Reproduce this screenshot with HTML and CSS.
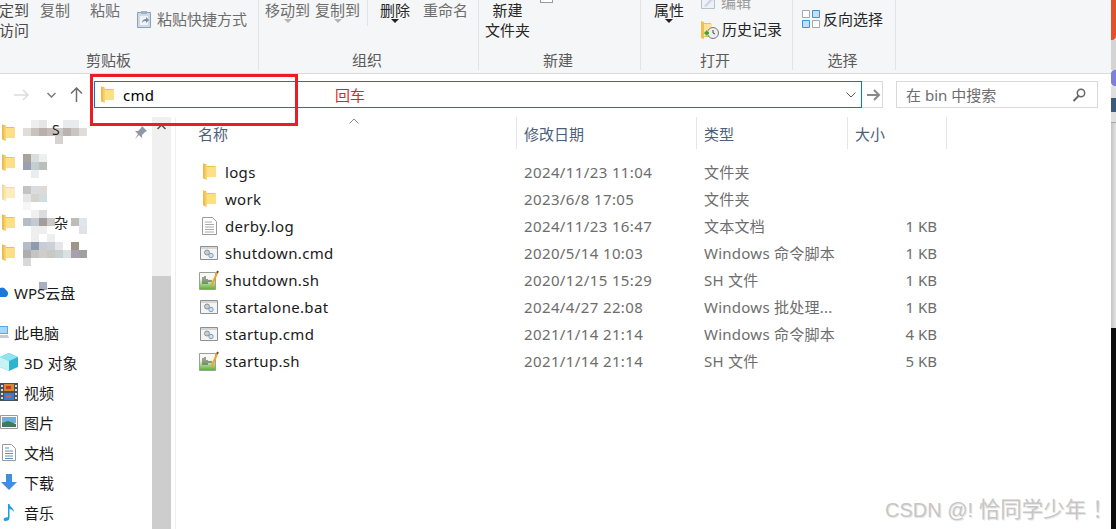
FILE: index.html
```html
<!DOCTYPE html>
<html lang="zh-CN">
  <head>
    <meta charset="UTF-8" />
    <title>bin</title>
    <link rel="stylesheet" href="styles.css">
  </head>
  <body>
    <!-- shared icons -->
    <svg class="defs" width="0" height="0">
      <symbol id="i-folder" viewBox="0 0 14 18">
        <path d="M0 0l4 1.500V3h9.500v12H4v3l-4-1.500z" fill="#eebd4a"/>
        <path d="M4 4h10v11H4z" fill="#fcdf86"/>
        <path d="M2.500 2h1.500v15.500H2.500z" fill="#f8d878"/>
      </symbol>
      <symbol id="i-doc" viewBox="0 0 15 18">
        <path d="M.5.500h10l4 4v13H.5z" fill="#fff" stroke="#9a9a9a"/>
        <path d="M3 5h7M3 7.500h9M3 10h9M3 12.500h9M3 15h9" stroke="#a9a9a9"/>
      </symbol>
      <symbol id="i-cmd" viewBox="0 0 18 14">
        <path d="M.5.500h17v13H.5z" fill="#f4f4f4" stroke="#8f8f8f"/>
        <path d="M1 1h16v2H1z" fill="#d6d6d6"/>
        <circle cx="7" cy="6.500" r="2.500" fill="#c9ccd0" stroke="#8d9298"/>
        <circle cx="11" cy="9.500" r="2.200" fill="#cfe0f0" stroke="#7f9cb8"/>
      </symbol>
      <symbol id="i-sh" viewBox="0 0 20 20">
        <defs>
          <linearGradient id="sh-fill" x1="0" y1="0" x2="0" y2="1">
            <stop offset="0.350" stop-color="#f8f9f2"/>
            <stop offset="1" stop-color="#55b02e"/>
          </linearGradient>
        </defs>
        <path d="M.5 2.500h16v17H.5z" fill="url(#sh-fill)" stroke="#9aa095"/>
        <path d="M4 7v7M6 6v8M8 9v5M10 10v2M12 10v2" stroke="#3a4a30"/>
        <path d="M12.500 16L18 3" stroke="#eba52e" stroke-width="2"/>
        <path d="M18 3l1-2" stroke="#7a4a20" stroke-width="2"/>
      </symbol>
    </svg>

    <div class="page">
      <div class="window">
        <!-- ribbon, the top of it is cut off in the picture -->
        <div class="ribbon">
          <div class="rgroup rgroup-clip">
            <div class="rbody">
              <div class="rcol cut-left muted-dark">定到<br>访问</div>
              <div class="rcol ml-11">复制</div>
              <div class="rcol ml-20">粘贴</div>
              <div class="ritem ml-17 mt-9">
                <svg class="paste-icon" width="14" height="18" viewBox="0 0 14 18">
                  <path d="M.5 2.500h13v15H.5z" fill="#cfd9e6" stroke="#8c9fb8"/>
                  <path d="M4 1h6v3H4z" fill="#9fb0c4"/>
                  <path d="M3 6h8v9H3z" fill="#f2f2f2"/>
                  <path d="M5 13c0-3 2-4 4-4V7l3 3-3 3v-2c-1 0-3 0-4 2z" fill="#6f8eb0"/>
                </svg>
                <span>粘贴快捷方式</span>
              </div>
            </div>
            <div class="rlabel label-clip">剪贴板</div>
          </div>

          <div class="rgroup rgroup-org">
            <div class="rbody">
              <div class="rcol ml-6">移动到<i class="caret caret-gray"></i></div>
              <div class="rcol ml-5">复制到<i class="caret caret-gray"></i></div>
              <div class="rsep"></div>
              <div class="rcol ml-12 dark">删除<i class="caret"></i></div>
              <div class="rcol ml-13">重命名</div>
            </div>
            <div class="rlabel">组织</div>
          </div>

          <div class="rgroup rgroup-new">
            <div class="rbody">
              <div class="rcol ml-6 center dark">新建<br>文件夹</div>
              <div class="new-item ml-10"></div>
            </div>
            <div class="rlabel">新建</div>
          </div>

          <div class="rgroup rgroup-open">
            <div class="rbody">
              <div class="rcol ml-13 dark">属性<i class="caret"></i></div>
              <div class="open-list ml-17">
                <div class="ritem muted-edit">
                  <svg width="14" height="14" viewBox="0 0 14 14">
                    <path d="M.5.500h13v13H.5z" fill="#eef1f5" stroke="#b5c0cc"/>
                    <path d="M3 11l7-8 2 2-7 7z" fill="#cdd6e2"/>
                  </svg>
                  <span>编辑</span>
                </div>
                <div class="ritem dark history">
                  <svg width="18" height="19" viewBox="0 0 18 19">
                    <path d="M0 1l3 1v1h7v14H3v2l-3-1z" fill="#f0c050"/>
                    <path d="M3 4h8v12H3z" fill="#fde49a"/>
                    <circle cx="12" cy="13" r="5.500" fill="#eee" stroke="#777"/>
                    <path d="M12 10v3l2 1" stroke="#444" fill="none"/>
                    <path d="M3 13l3-3v2h2v2H6v2z" fill="#3fa535"/>
                  </svg>
                  <span>历史记录</span>
                </div>
              </div>
            </div>
            <div class="rlabel">打开</div>
          </div>

          <div class="rgroup rgroup-sel">
            <div class="rbody">
              <div class="ritem sel-item dark ml-9 mt-9">
                <svg width="18" height="18" viewBox="0 0 18 18">
                  <path d="M.5.500h7v7h-7zM10.500 10.500h7v7h-7z" fill="#fff" stroke="#a8a8a8"/>
                  <path d="M10.500.500h7v7h-7zM.5 10.500h7v7h-7z" fill="#bfe0f8" stroke="#3d94d8"/>
                </svg>
                <span>反向选择</span>
              </div>
            </div>
            <div class="rlabel">选择</div>
          </div>
        </div>

        <!-- address bar -->
        <div class="addr-row">
          <div class="nav">
            <svg width="16" height="12" viewBox="0 0 16 12"><path d="M0 6h14M9 1l5 5-5 5" fill="none" stroke="#dcdcdc" stroke-width="1.500"/></svg>
            <svg class="nav-down" width="9" height="6" viewBox="0 0 9 6"><path d="M.5 1l4 4 4-4" fill="none" stroke="#7a7a7a" stroke-width="1.500"/></svg>
            <svg class="nav-up" width="13" height="15" viewBox="0 0 13 15"><path d="M6.500 15V1M1 6.500l5.500-5.500L12 6.500" fill="none" stroke="#6e6e6e" stroke-width="1.500"/></svg>
          </div>
          <div class="addr-box">
            <svg class="addr-folder" width="13" height="17"><use href="#i-folder"/></svg>
            <span class="addr-text">cmd</span>
            <svg class="addr-chev" width="10" height="6" viewBox="0 0 10 6"><path d="M.5.500L5 5 9.500.500" fill="none" stroke="#555"/></svg>
          </div>
          <div class="go-btn">
            <svg width="14" height="12" viewBox="0 0 14 12"><path d="M0 6h12M7 1l5 5-5 5" fill="none" stroke="#8a8a8a" stroke-width="2"/></svg>
          </div>
          <div class="search-box">
            <span>在 bin 中搜索</span>
            <svg width="14" height="14" viewBox="0 0 14 14"><circle cx="9" cy="5" r="3.700" fill="none" stroke="#666" stroke-width="1.500"/><path d="M6.500 8L1.500 13" stroke="#666" stroke-width="2"/></svg>
          </div>
        </div>

        <div class="main">
          <!-- navigation pane -->
          <div class="sidebar">
            <div class="side-row">
              <svg class="side-folder" width="13" height="17"><use href="#i-folder"/></svg>
              <svg class="mosaic" width="64" height="30">
                <rect x="8" y="3" width="8" height="8" fill="#eeeeee"/><rect x="16" y="3" width="8" height="8" fill="#e5e5e5"/><rect x="40" y="3" width="16" height="8" fill="#e8ebec"/>
                <rect x="0" y="11" width="8" height="8" fill="#e0dcd8"/><rect x="8" y="11" width="8" height="8" fill="#c9c1bc"/><rect x="16" y="11" width="8" height="8" fill="#b9b0ac"/><rect x="24" y="11" width="8" height="8" fill="#c4bcb8"/><rect x="32" y="11" width="8" height="8" fill="#cfc9c6"/><rect x="40" y="11" width="8" height="8" fill="#b9b2ad"/><rect x="48" y="11" width="8" height="8" fill="#c9c5c2"/><rect x="56" y="11" width="8" height="8" fill="#dedddc"/>
                <rect x="32" y="19" width="8" height="8" fill="#d5d2cf"/>
                <text class="mosaic-text" x="29" y="18">S</text>
              </svg>
              <svg class="pin" width="13" height="13" viewBox="0 0 13 13"><path d="M8 0l5 5-2 1-3 3v3L5 9l-4 4 3-5-3-3h3l3-3z" fill="#8d99a6"/></svg>
            </div>
            <div class="side-row">
              <svg class="side-folder" width="13" height="17"><use href="#i-folder"/></svg>
              <svg class="mosaic" width="64" height="30">
                <rect x="0" y="7" width="8" height="8" fill="#aaa39a"/><rect x="8" y="7" width="8" height="8" fill="#d8dde0"/><rect x="16" y="7" width="8" height="8" fill="#eef0ee"/>
                <rect x="0" y="15" width="8" height="8" fill="#9aa0b0"/><rect x="8" y="15" width="8" height="8" fill="#c4cdd0"/><rect x="16" y="15" width="8" height="8" fill="#b9c0bc"/>
                <rect x="8" y="23" width="8" height="8" fill="#e8eef0"/>
              </svg>
            </div>
            <div class="side-row">
              <svg class="side-folder faded" width="13" height="17"><use href="#i-folder"/></svg>
              <svg class="mosaic" width="64" height="30">
                <rect x="0" y="9" width="8" height="8" fill="#c3c3c3"/><rect x="8" y="9" width="8" height="8" fill="#d8dde2"/><rect x="16" y="9" width="8" height="8" fill="#dedad6"/>
                <rect x="0" y="17" width="8" height="8" fill="#e6e6e6"/><rect x="8" y="17" width="8" height="8" fill="#d7d3cc"/><rect x="16" y="17" width="8" height="8" fill="#cfdde3"/>
                <rect x="0" y="25" width="8" height="8" fill="#f6f6f6"/>
              </svg>
            </div>
            <div class="side-row">
              <svg class="side-folder" width="13" height="17"><use href="#i-folder"/></svg>
              <svg class="mosaic" width="64" height="30">
                <rect x="8" y="3" width="8" height="8" fill="#f0f0f0"/><rect x="16" y="3" width="8" height="8" fill="#dddddd"/>
                <rect x="0" y="11" width="8" height="8" fill="#b4bcc6"/><rect x="8" y="11" width="8" height="8" fill="#c4cad0"/><rect x="16" y="11" width="8" height="8" fill="#a59c9c"/><rect x="24" y="11" width="8" height="8" fill="#c9c9c9"/><rect x="48" y="11" width="8" height="8" fill="#bcbcb8"/><rect x="56" y="11" width="8" height="8" fill="#dfe6ee"/>
                <rect x="8" y="19" width="8" height="8" fill="#eeeeee"/><rect x="16" y="19" width="8" height="8" fill="#eeeeee"/><rect x="56" y="19" width="8" height="8" fill="#dfe2e6"/>
                <text class="mosaic-text" x="31" y="21">杂</text>
              </svg>
            </div>
            <div class="side-row">
              <svg class="side-folder" width="13" height="17"><use href="#i-folder"/></svg>
              <svg class="mosaic" width="64" height="30">
                <rect x="8" y="-3" width="8" height="8" fill="#eeeeee"/><rect x="24" y="-3" width="8" height="8" fill="#eeeeee"/>
                <rect x="0" y="5" width="8" height="8" fill="#b5bcc8"/><rect x="8" y="5" width="8" height="8" fill="#8c9cac"/><rect x="16" y="5" width="8" height="8" fill="#c9ccd4"/><rect x="24" y="5" width="8" height="8" fill="#ccd0d8"/><rect x="32" y="5" width="8" height="8" fill="#e6e6ea"/><rect x="48" y="5" width="8" height="8" fill="#9e9488"/>
                <rect x="0" y="13" width="8" height="8" fill="#aeaeae"/><rect x="8" y="13" width="8" height="8" fill="#c4c4c4"/><rect x="16" y="13" width="8" height="8" fill="#d0ccc8"/><rect x="24" y="13" width="8" height="8" fill="#c8c8c4"/><rect x="32" y="13" width="8" height="8" fill="#c8d0d4"/><rect x="40" y="13" width="8" height="8" fill="#dce0e0"/><rect x="48" y="13" width="8" height="8" fill="#a8a0b0"/><rect x="56" y="13" width="8" height="8" fill="#a0a0a0"/>
                <rect x="0" y="21" width="8" height="8" fill="#d8d8d8"/>
                <rect x="16" y="45" width="8" height="8" fill="#a8b0c0"/>
              </svg>
            </div>

            <div class="side-row side-gap">
              <svg class="cloud-icon" width="14" height="12" viewBox="0 0 14 12"><path d="M3 11a3 3 0 0 1 0-6 5 5 0 0 1 9-1 4 4 0 0 1 0 7z" fill="#1a78d8"/></svg>
              <span>WPS云盘</span>
            </div>
            <div class="side-row side-gap">
              <svg class="pc-icon" width="14" height="14" viewBox="0 0 14 14"><path d="M0 1h13v8H0z" fill="#5aa8e0"/><path d="M1 2h11v6H1z" fill="#a8d8f4"/><path d="M0 10h13l1 3H1z" fill="#c8ccd2"/></svg>
              <span>此电脑</span>
            </div>
            <div class="side-row">
              <span class="side-box"><svg width="18" height="18" viewBox="0 0 18 18"><path d="M9 0l9 4v10l-9 4-9-4V4z" fill="#2fb4d0"/><path d="M9 0l9 4-9 4-9-4z" fill="#8fe4f0"/><path d="M0 4l9 4v10l-9-4z" fill="#c8f2f6"/></svg></span>
              <span>3D 对象</span>
            </div>
            <div class="side-row">
              <span class="side-box"><svg width="18" height="18" viewBox="0 0 18 18"><path d="M0 0h18v18H0z" fill="#4a5058"/><path d="M4 1h10v7H4z" fill="#d08a30"/><path d="M4 10h10v7H4z" fill="#3a7ad0"/><path d="M6 3h5v3H6z" fill="#c03a30"/><path d="M6 12h5v3H6z" fill="#d0603a"/><path d="M1 2h2v2H1zM1 6h2v2H1zM1 10h2v2H1zM1 14h2v2H1zM15 2h2v2h-2zM15 6h2v2h-2zM15 10h2v2h-2zM15 14h2v2h-2z" fill="#ddd"/></svg></span>
              <span>视频</span>
            </div>
            <div class="side-row">
              <span class="side-box"><svg width="18" height="14" viewBox="0 0 18 14"><path d="M.5.500h17v13H.5z" fill="#fff" stroke="#9a9a9a"/><path d="M2 2h14v6H2z" fill="#6fb0d8"/><path d="M2 8l6-2 8 3v3H2z" fill="#3f7a60"/></svg></span>
              <span>图片</span>
            </div>
            <div class="side-row">
              <span class="side-box"><svg width="14" height="17" viewBox="0 0 14 17"><path d="M.5.500h9l4 4v12H.5z" fill="#fff" stroke="#9a9a9a"/><path d="M3 4h4M3 7h8M3 9.500h8M3 12h8M3 14.500h8" stroke="#5f90c0"/></svg></span>
              <span>文档</span>
            </div>
            <div class="side-row">
              <span class="side-box"><svg width="16" height="16" viewBox="0 0 16 16"><path d="M5 0h6v8h5l-8 8-8-8h5z" fill="#3f8fe0"/></svg></span>
              <span>下载</span>
            </div>
            <div class="side-row">
              <span class="side-box"><svg width="12" height="17" viewBox="0 0 12 17"><path d="M5 0h1.500c0 3 5 4 4 8-.5-2-2.500-3-4-3v9c0 2-2 3-4 3s-2.500-2-1-3 2.500-1 3.500-.5z" fill="#1f9be8"/></svg></span>
              <span>音乐</span>
            </div>
          </div>

          <div class="scrollbar">
            <div class="scroll-track">
              <svg width="9" height="6" viewBox="0 0 9 6"><path d="M.5 5l4-4 4 4" fill="none" stroke="#505050" stroke-width="1.500"/></svg>
            </div>
            <div class="scroll-thumb"></div>
          </div>

          <!-- file list -->
          <div class="files">
            <div class="file-head">
              <div class="col-name head-cell">名称
                <svg class="sort-arrow" width="10" height="6" viewBox="0 0 10 6"><path d="M.5 5.500L5 1l4.500 4.500" fill="none" stroke="#8a8a8a"/></svg>
              </div>
              <div class="head-cell">修改日期</div>
              <div class="head-cell">类型</div>
              <div class="head-cell">大小</div>
            </div>

            <div class="file-list">
              <div class="file-row">
                <div class="file-name"><span class="file-ico"><svg width="13" height="17"><use href="#i-folder"/></svg></span>logs</div>
                <div class="cell-date">2024/11/23 11:04</div>
                <div class="cell-type">文件夹</div>
                <div class="cell-size"></div>
              </div>
              <div class="file-row">
                <div class="file-name"><span class="file-ico"><svg width="13" height="17"><use href="#i-folder"/></svg></span>work</div>
                <div class="cell-date">2023/6/8 17:05</div>
                <div class="cell-type">文件夹</div>
                <div class="cell-size"></div>
              </div>
              <div class="file-row">
                <div class="file-name"><span class="file-ico"><svg width="15" height="18"><use href="#i-doc"/></svg></span>derby.log</div>
                <div class="cell-date">2024/11/23 16:47</div>
                <div class="cell-type">文本文档</div>
                <div class="cell-size">1 KB</div>
              </div>
              <div class="file-row">
                <div class="file-name"><span class="file-ico"><svg width="18" height="14"><use href="#i-cmd"/></svg></span>shutdown.cmd</div>
                <div class="cell-date">2020/5/14 10:03</div>
                <div class="cell-type">Windows 命令脚本</div>
                <div class="cell-size">1 KB</div>
              </div>
              <div class="file-row">
                <div class="file-name"><span class="file-ico"><svg width="20" height="20"><use href="#i-sh"/></svg></span>shutdown.sh</div>
                <div class="cell-date">2020/12/15 15:29</div>
                <div class="cell-type">SH 文件</div>
                <div class="cell-size">1 KB</div>
              </div>
              <div class="file-row">
                <div class="file-name"><span class="file-ico"><svg width="18" height="14"><use href="#i-cmd"/></svg></span>startalone.bat</div>
                <div class="cell-date">2024/4/27 22:08</div>
                <div class="cell-type">Windows 批处理...</div>
                <div class="cell-size">1 KB</div>
              </div>
              <div class="file-row">
                <div class="file-name"><span class="file-ico"><svg width="18" height="14"><use href="#i-cmd"/></svg></span>startup.cmd</div>
                <div class="cell-date">2021/1/14 21:14</div>
                <div class="cell-type">Windows 命令脚本</div>
                <div class="cell-size">4 KB</div>
              </div>
              <div class="file-row">
                <div class="file-name"><span class="file-ico"><svg width="20" height="20"><use href="#i-sh"/></svg></span>startup.sh</div>
                <div class="cell-date">2021/1/14 21:14</div>
                <div class="cell-type">SH 文件</div>
                <div class="cell-size">5 KB</div>
              </div>
            </div>
          </div>
        </div>
      </div>

      <!-- sliver of the window behind -->
      <div class="edge">
        <div class="edge-orange"></div>
        <div class="edge-gray"></div>
        <div class="edge-purple"></div>
        <div class="edge-glyph"></div>
        <div class="edge-rest"></div>
        <div class="edge-black"></div>
      </div>
    </div>

    <!-- annotation drawn on top of the screenshot -->
    <div class="mark-box"></div>
    <div class="mark-text">回车</div>
    <div class="watermark">CSDN @! <span class="watermark-cjk">恰同学少年 ！</span></div>
  </body>
</html>
```

FILE: styles.css
```css
* {
  box-sizing: border-box;
}

html,
body {
  margin: 0;
  height: 529px;
  overflow: hidden;
}

body {
  position: relative;
  width: 1116px;
  background-color: white;
  color: #1a1a1a;
  font-family: "Noto Sans", "Noto Sans CJK SC", sans-serif;
  font-size: 15px;
}

.defs {
  display: block;
  height: 0;
}

.page {
  display: flex;
  height: 529px;
}

.window {
  width: 1111px;
  display: flex;
  flex-direction: column;
}

/* Ribbon */
.ribbon {
  display: flex;
  height: 74px;
  background-color: #f5f6f7;
  border-bottom: 1px solid #dadbdc;
  color: #6d6d6d;
  overflow: hidden;
  line-height: 20px;
}

.rgroup {
  display: flex;
  flex-direction: column;
  height: 70px;
  border-right: 1px solid #e1e3e6;
}

.rgroup-clip { width: 259px; }
.rgroup-org { width: 220px; }
.rgroup-new { width: 162px; }
.rgroup-open { width: 152px; }
.rgroup-sel { width: 103px; }

.rbody {
  display: flex;
  align-items: flex-start;
  height: 50px;
}

.rlabel {
  height: 20px;
  padding-right: 3px;
  text-align: center;
  color: #5a5a5a;
}

.label-clip {
  padding-right: 41px;
}

.rcol {
  flex-shrink: 0;
}

.ritem {
  display: flex;
  align-items: center;
  flex-shrink: 0;
  gap: 6px;
}

.sel-item {
  gap: 3px;
}

.rsep {
  width: 1px;
  height: 26px;
  margin-left: 7px;
  background-color: #e1e3e6;
}

.center {
  text-align: center;
}

.dark {
  color: #262626;
}

.muted-dark {
  color: #4a4a4a;
}

.cut-left {
  margin-left: -1px;
}

.caret {
  display: block;
  width: 0;
  margin: -1px auto 0;
  border-left: 4px solid transparent;
  border-right: 4px solid transparent;
  border-top: 4px solid #222;
}

.caret-gray {
  border-top-color: #b4b4b4;
}

.new-item {
  width: 13px;
  height: 3px;
  border: 1px solid #9a9a9a;
  border-top: 0;
  background-color: #fff;
}

.open-list {
  display: flex;
  flex-direction: column;
  gap: 7px;
  margin-top: -8px;
}

.muted-edit {
  color: #9a9a9a;
}

.history {
  gap: 3px;
}

.ml-5 { margin-left: 5px; }
.ml-6 { margin-left: 6px; }
.ml-9 { margin-left: 9px; }
.ml-10 { margin-left: 10px; }
.ml-11 { margin-left: 11px; }
.ml-12 { margin-left: 12px; }
.ml-13 { margin-left: 13px; }
.ml-17 { margin-left: 17px; }
.ml-20 { margin-left: 20px; }
.mt-9 { margin-top: 9px; }

/* Address bar */
.addr-row {
  display: flex;
  height: 43px;
  padding-top: 7px;
}

.nav {
  display: flex;
  align-items: center;
  width: 94px;
  height: 27px;
  padding-left: 14px;
}

.nav-down {
  margin-left: 17px;
}

.nav-up {
  margin-left: 14px;
}

.addr-box {
  display: flex;
  align-items: center;
  width: 768px;
  height: 27px;
  padding: 0 5px 0 6px;
  border: 1px solid #0078d7;
}

.addr-text {
  margin-left: 9px;
  letter-spacing: 0.3px;
  color: #000;
}

.addr-chev {
  margin-left: auto;
}

.go-btn {
  display: flex;
  align-items: center;
  justify-content: center;
  width: 21px;
  height: 27px;
  padding-left: 4px;
  border: 1px solid #d9d9d9;
  border-left: 0;
}

.search-box {
  display: flex;
  align-items: center;
  justify-content: space-between;
  width: 202px;
  height: 27px;
  margin-left: 13px;
  padding: 0 11px 0 9px;
  border: 1px solid #d9d9d9;
  color: #6d6d6d;
}

/* Main area */
.main {
  display: flex;
  flex: 1;
  min-height: 0;
}

.sidebar {
  width: 152px;
  flex-shrink: 0;
}

.side-row {
  display: flex;
  align-items: center;
  height: 30px;
  color: #1a1a1a;
}

.side-gap {
  margin-top: 10px;
}

.side-box {
  display: flex;
  justify-content: center;
  flex-shrink: 0;
  width: 18px;
  margin-right: 6px;
}

.cloud-icon {
  flex-shrink: 0;
  margin: 0 6px 0 -6px;
}

.pc-icon {
  flex-shrink: 0;
  margin: 0 5px 0 -5px;
}

.side-folder {
  flex-shrink: 0;
  margin: 0 8px 0 2px;
}

.faded {
  opacity: 0.55;
}

.mosaic {
  overflow: visible;
  flex-shrink: 0;
}

.mosaic-text {
  font-size: 14px;
  fill: #222;
}

.pin {
  margin-left: auto;
  margin-right: 5px;
}

.scrollbar {
  display: flex;
  flex-direction: column;
  width: 20px;
  flex-shrink: 0;
  border-right: 1px solid #fff;
}

.scroll-track {
  display: flex;
  justify-content: center;
  height: 159px;
  padding-top: 7px;
  background-color: #f0f0f0;
}

.scroll-thumb {
  flex: 1;
  background-color: #cdcdcd;
}

.files {
  flex: 1;
  margin-left: 3px;
  border-left: 1px solid #f0f0f0;
}

.file-head,
.file-row {
  display: grid;
  grid-template-columns: 341px 180px 151px 99px;
}

.file-head {
  height: 32px;
  color: #4c607a;
}

.head-cell {
  display: flex;
  align-items: center;
  padding-left: 7px;
  border-right: 1px solid #e5e5e5;
}

.col-name {
  position: relative;
  padding-left: 22px;
}

.sort-arrow {
  position: absolute;
  left: 173px;
  top: 1px;
}

.file-list {
  padding-top: 9px;
}

.file-row {
  height: 27px;
  align-items: center;
  color: #6d6d6d;
}

.file-name {
  display: flex;
  align-items: center;
  letter-spacing: 0.33px;
  color: #1a1a1a;
}

.file-ico {
  display: flex;
  justify-content: center;
  align-items: center;
  width: 20px;
  margin-left: 23px;
  margin-right: 6px;
}

.cell-date {
  padding-left: 7px;
  letter-spacing: 0.38px;
}

.cell-type {
  padding-left: 7px;
  letter-spacing: 0.25px;
}

.cell-size {
  padding-right: 10px;
  text-align: right;
}

/* Right edge */
.edge {
  display: flex;
  flex-direction: column;
  width: 5px;
}

.edge-orange {
  height: 40px;
  background-color: #e0522b;
  border-radius: 0 0 4px 0;
}

.edge-gray {
  height: 30px;
  background-color: #d4d4d4;
}

.edge-purple {
  height: 16px;
  background-color: #7d80d9;
  border-radius: 4px 0 0 4px;
}

.edge-glyph {
  height: 37px;
  background: linear-gradient(#dfdfdf 12px, #3a5a80 12px, #3a5a80 26px, #dfdfdf 26px);
  border-bottom: 1px solid #a8a8a8;
}

.edge-rest {
  height: 205px;
  background: linear-gradient(to right, #c4c4c4, #e2e2e2);
}

.edge-black {
  flex: 1;
  background-color: #0c0c0c;
}

/* Annotation */
.mark-box {
  position: absolute;
  left: 90px;
  top: 74px;
  width: 208px;
  height: 52px;
  border: 3px solid #ed1c24;
}

.mark-text {
  position: absolute;
  left: 335px;
  top: 85px;
  color: #ed1c24;
  line-height: 20px;
}

.watermark {
  position: absolute;
  left: 885px;
  top: 497px;
  color: #c6c6c6;
  font-family: "Liberation Sans", "Noto Sans CJK SC", sans-serif;
  font-size: 20px;
  line-height: 26px;
  white-space: nowrap;
  text-shadow: 1px 1px 1px #e4e4e4;
}

.watermark-cjk {
  font-size: 21.5px;
}
```
